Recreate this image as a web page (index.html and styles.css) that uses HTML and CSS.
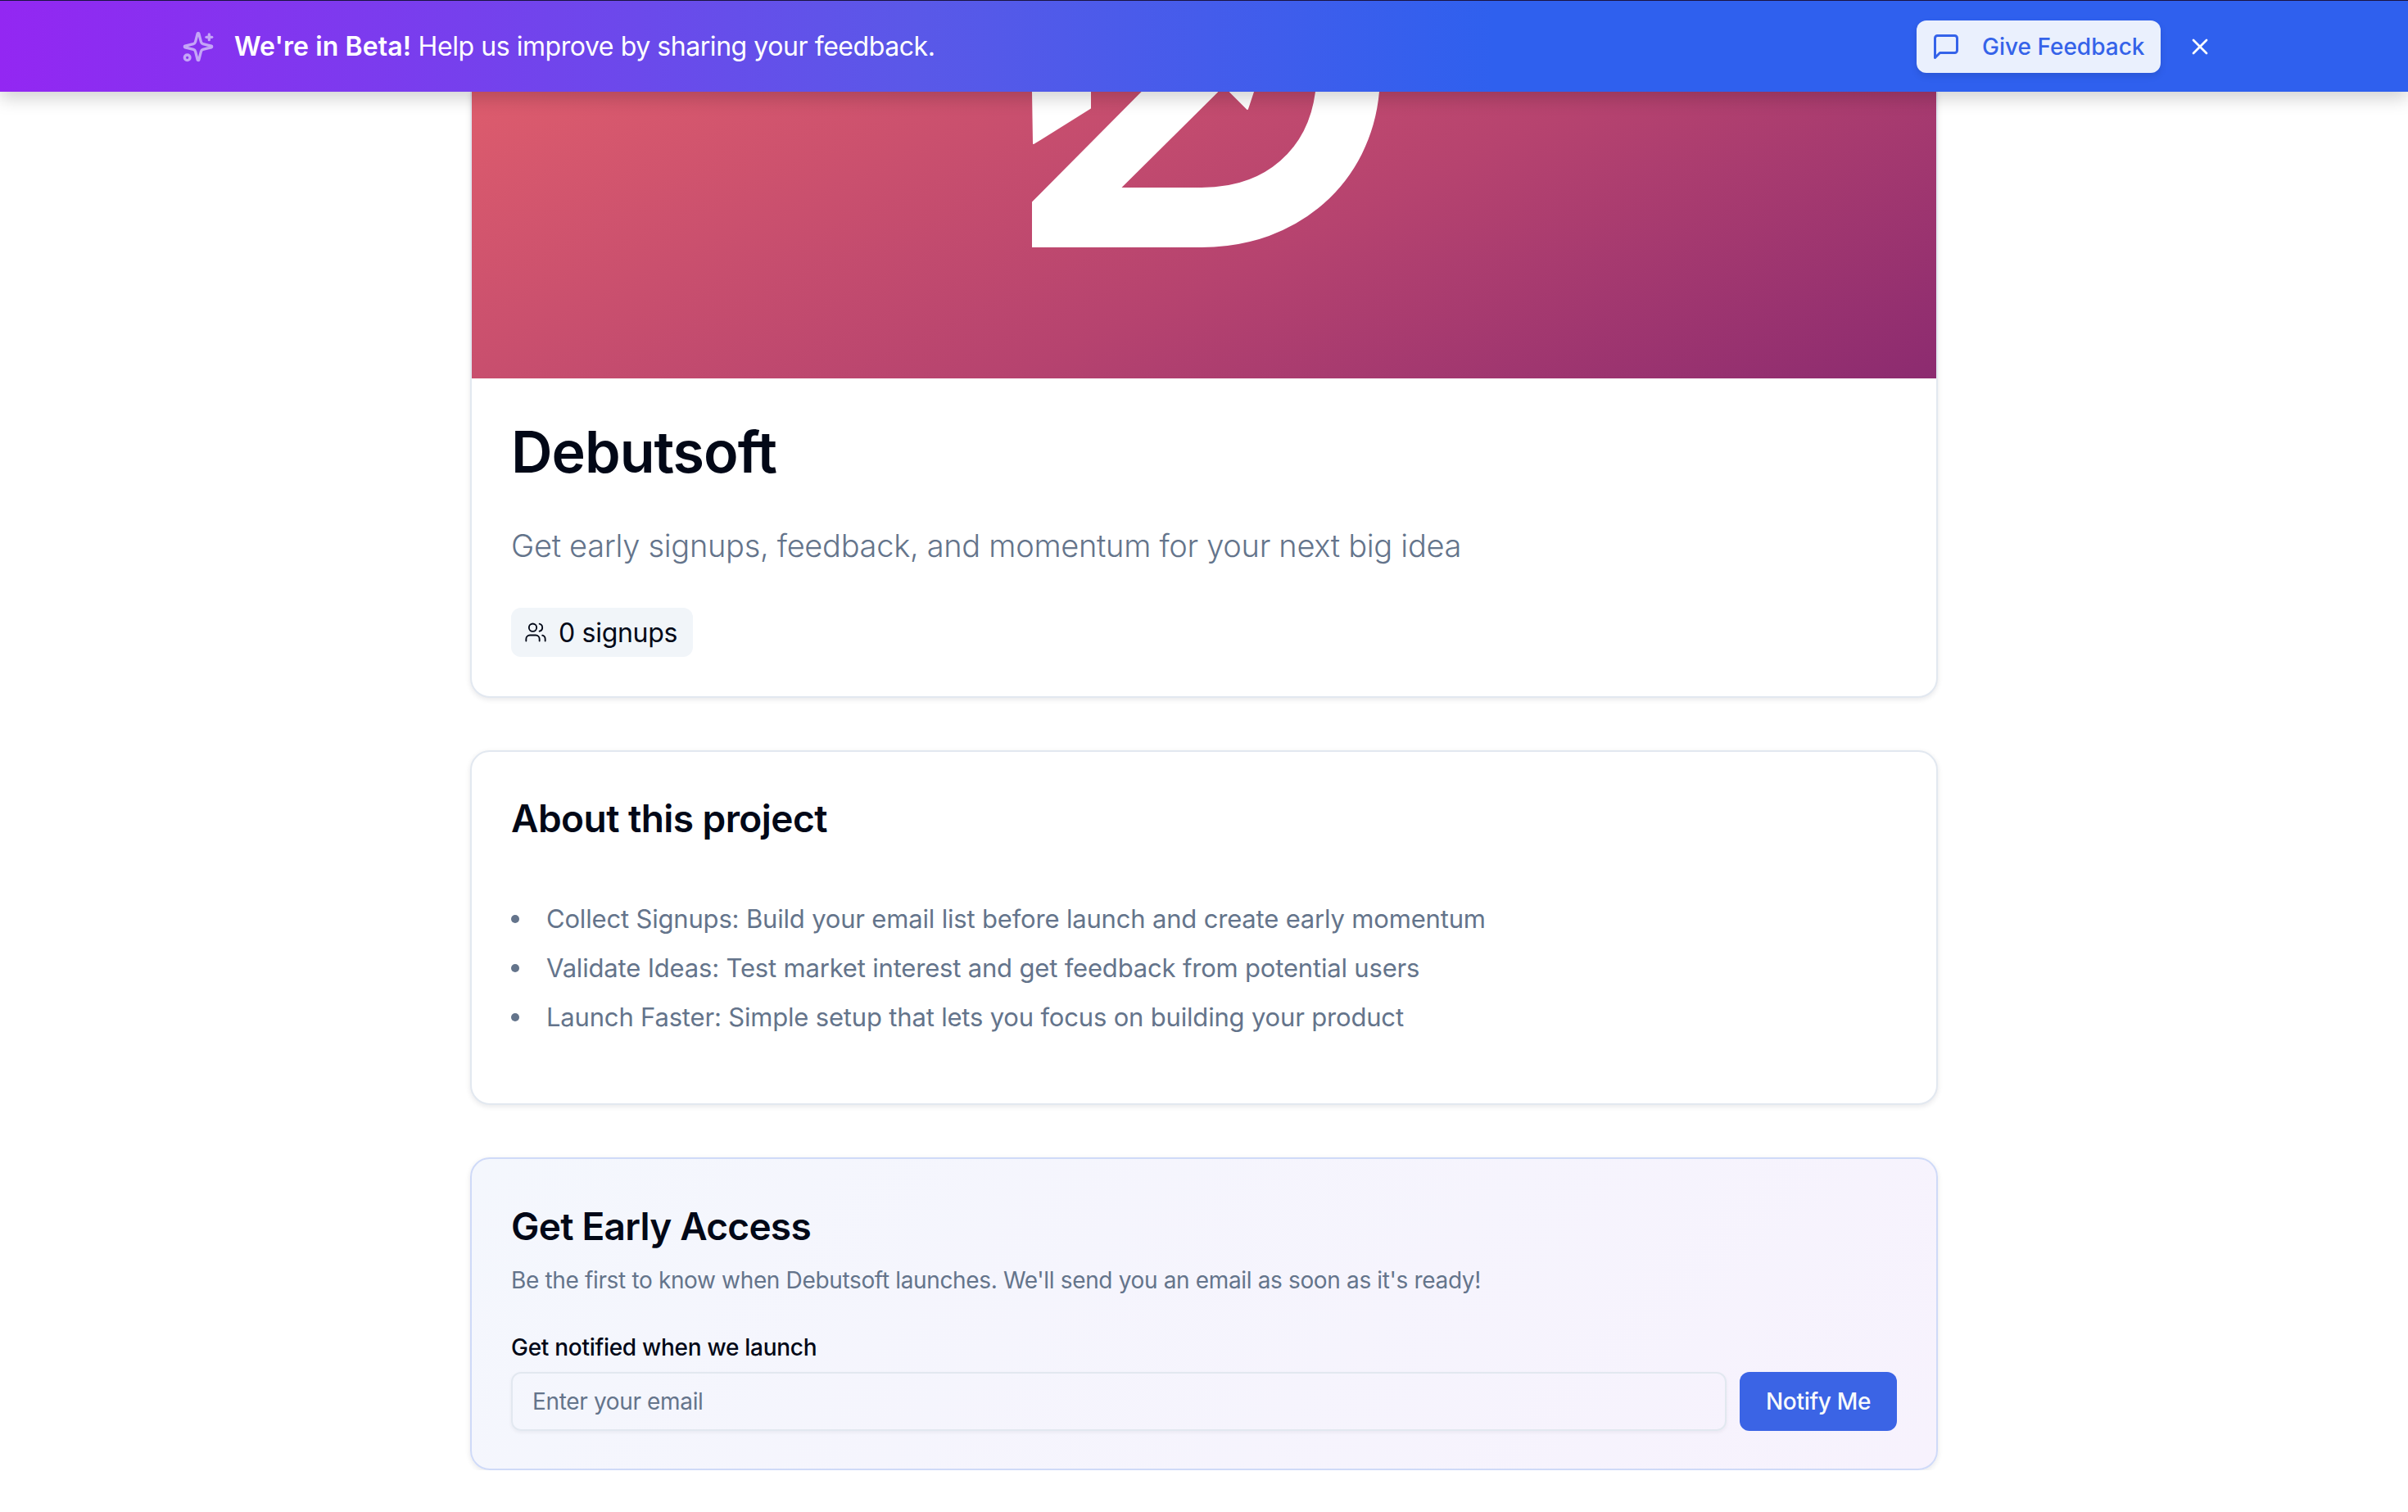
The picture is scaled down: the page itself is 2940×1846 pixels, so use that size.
FILE: index.html
```html
<!DOCTYPE html>
<html lang="en">
<head>
  <meta charset="UTF-8">
  <meta name="viewport" content="width=device-width, initial-scale=1.0">
  <title>Debutsoft</title>
  <link rel="stylesheet" href="styles.css">
</head>
<body>
  <div class="banner">
    <div class="banner-msg">
      <svg class="banner-spark" viewBox="0 0 24 24" fill="none" stroke="currentColor" stroke-width="2" stroke-linecap="round" stroke-linejoin="round">
        <path d="M9.937 15.5A2 2 0 0 0 8.5 14.063l-6.135-1.582a.5.5 0 0 1 0-.962L8.5 9.936A2 2 0 0 0 9.937 8.5l1.582-6.135a.5.5 0 0 1 .963 0L14.063 8.5A2 2 0 0 0 15.5 9.937l6.135 1.581a.5.5 0 0 1 0 .964L15.5 14.063a2 2 0 0 0-1.437 1.437l-1.582 6.135a.5.5 0 0 1-.963 0z"/>
        <path d="M20 3v4"/>
        <path d="M22 5h-4"/>
        <circle cx="4" cy="20" r="2"/>
      </svg>
      <p><strong>We're in Beta!</strong> Help us improve by sharing your feedback.</p>
    </div>
    <div class="banner-actions">
      <button class="feedback-btn">
        <svg viewBox="0 0 24 24" fill="none" stroke="currentColor" stroke-width="2" stroke-linecap="round" stroke-linejoin="round">
          <path d="M21 15a2 2 0 0 1-2 2H7l-4 4V5a2 2 0 0 1 2-2h14a2 2 0 0 1 2 2z"/>
        </svg>
        Give Feedback
      </button>
      <button class="close-btn">
        <svg viewBox="0 0 24 24" fill="none" stroke="currentColor" stroke-width="2" stroke-linecap="round" stroke-linejoin="round">
          <path d="M18 6 6 18"/>
          <path d="m6 6 12 12"/>
        </svg>
      </button>
    </div>
  </div>

  <div class="container">
    <div class="card hero-card">
      <div class="hero">
        <svg class="hero-logo" viewBox="0 0 424 190">
          <path d="M1 0H71V20L2 63Z"/>
          <path d="M135 0H226L107 118H207C287 118 338 70 347 0H423C413 110 325 189 207 189H0V136Z"/>
          <path d="M242 0H270L263 21Z"/>
        </svg>
      </div>
      <div class="hero-body">
        <h1>Debutsoft</h1>
        <p class="tagline">Get early signups, feedback, and momentum for your next big idea</p>
        <div class="signups">
          <svg viewBox="0 0 24 24" fill="none" stroke="currentColor" stroke-width="2" stroke-linecap="round" stroke-linejoin="round">
            <path d="M16 21v-2a4 4 0 0 0-4-4H6a4 4 0 0 0-4 4v2"/>
            <circle cx="9" cy="7" r="4"/>
            <path d="M22 21v-2a4 4 0 0 0-3-3.87"/>
            <path d="M16 3.13a4 4 0 0 1 0 7.75"/>
          </svg>
          <span>0 signups</span>
        </div>
      </div>
    </div>

    <div class="card about-card">
      <h2>About this project</h2>
      <ul>
        <li>Collect Signups: Build your email list before launch and create early momentum</li>
        <li>Validate Ideas: Test market interest and get feedback from potential users</li>
        <li>Launch Faster: Simple setup that lets you focus on building your product</li>
      </ul>
    </div>

    <div class="card signup-card">
      <h2>Get Early Access</h2>
      <p class="signup-desc">Be the first to know when Debutsoft launches. We'll send you an email as soon as it's ready!</p>
      <label class="signup-label" for="email">Get notified when we launch</label>
      <div class="signup-row">
        <input id="email" type="email" placeholder="Enter your email">
        <button class="notify-btn">Notify Me</button>
      </div>
    </div>
  </div>
</body>
</html>
```

FILE: styles.css
```css
* {
  box-sizing: border-box;
}
body {
  margin: 0;
  background: #fff;
  color: #020817;
  font-family: Inter, "Liberation Sans", sans-serif;
}
h1, h2, p, ul {
  margin: 0;
  padding: 0;
}
button {
  font-family: inherit;
  border: 0;
  cursor: pointer;
}

/* beta banner */
.banner {
  position: relative;
  z-index: 2;
  height: 112px;
  padding: 0 238px 0 222px;
  border-top: 1px solid #1a1340;
  display: flex;
  align-items: center;
  justify-content: space-between;
  color: #fff;
  background: linear-gradient(to right, #9327f2 0%, #5a58e8 38%, #2f60ee 62%, #2f60ee 100%);
  box-shadow: 0 8px 20px rgba(0, 0, 0, 0.18);
}
.banner-msg {
  display: flex;
  align-items: center;
  gap: 24px;
  font-size: 32px;
  letter-spacing: -0.44px;
}
.banner-msg strong {
  font-weight: 600;
  letter-spacing: 0.08px;
}
.banner-spark {
  width: 40px;
  height: 40px;
  color: #c4a5f7;
}
.banner-actions {
  display: flex;
  align-items: center;
  gap: 32px;
}
.feedback-btn {
  width: 298px;
  height: 64px;
  padding: 0 18px;
  display: flex;
  align-items: center;
  gap: 26px;
  border-radius: 12px;
  background: #eaf0fd;
  color: #3563e9;
  font-size: 28px;
  font-weight: 500;
  white-space: nowrap;
  box-shadow: 0 4px 8px rgba(0, 0, 0, 0.1);
}
.feedback-btn svg {
  width: 36px;
  height: 36px;
  flex: none;
}
.close-btn {
  padding: 0;
  display: flex;
  background: none;
  color: #fff;
}
.close-btn svg {
  width: 32px;
  height: 32px;
}

/* cards */
.container {
  width: 1792px;
  margin: 0 auto;
  display: flex;
  flex-direction: column;
  gap: 64px;
}
.card {
  border: 2px solid #e2e8f0;
  border-radius: 24px;
  background: #fff;
  box-shadow: 0 2px 6px rgba(15, 23, 42, 0.1);
}
.hero-card {
  border-top: 0;
  border-radius: 0 0 24px 24px;
}
.hero {
  position: relative;
  height: 350px;
  overflow: hidden;
  background: linear-gradient(155deg, #dd5c6d 0%, #b6436f 55%, #8c2b70 100%);
}
.hero-logo {
  position: absolute;
  left: 684px;
  top: 0;
  width: 424px;
  height: 190px;
  fill: #fff;
  stroke: #fff;
  stroke-width: 2;
  stroke-linejoin: round;
}
.hero-body {
  padding: 50px 48px 48px;
}
h1 {
  font-size: 70px;
  line-height: 80px;
  font-weight: 600;
  letter-spacing: -1px;
}
.tagline {
  margin-top: 46px;
  font-size: 38px;
  line-height: 56px;
  font-weight: 300;
  letter-spacing: -0.3px;
  color: #64748b;
}
.signups {
  margin-top: 48px;
  width: 222px;
  height: 60px;
  padding: 0 20px 0 16px;
  display: flex;
  align-items: center;
  gap: 14px;
  border-radius: 12px;
  background: #f1f5f9;
  font-size: 32px;
  letter-spacing: -0.3px;
  white-space: nowrap;
}
.signups svg {
  width: 28px;
  height: 28px;
  flex: none;
  stroke-width: 1.6;
}
h2 {
  font-size: 46px;
  line-height: 56px;
  font-weight: 600;
  letter-spacing: -0.55px;
}
.about-card {
  padding: 53px 48px 75px;
}
.about-card ul {
  margin-top: 65px;
  list-style: none;
  color: #64748b;
  font-size: 31px;
  line-height: 60px;
  letter-spacing: -0.18px;
}
.about-card li {
  display: flex;
  align-items: center;
  gap: 33px;
}
.about-card li::before {
  content: "";
  width: 10px;
  height: 10px;
  flex: none;
  border-radius: 50%;
  background: #64748b;
}
.signup-card {
  padding: 54px 48px 46px;
  border-color: #cfdaf8;
  background: linear-gradient(135deg, #f4f7fd, #f7f2fd);
}
.signup-card h2 {
  letter-spacing: -0.75px;
}
.signup-desc {
  margin-top: 18px;
  font-size: 28px;
  line-height: 40px;
  letter-spacing: -0.35px;
  color: #64748b;
}
.signup-label {
  display: block;
  margin-top: 42px;
  font-size: 28px;
  line-height: 40px;
  font-weight: 500;
  letter-spacing: -0.28px;
}
.signup-row {
  margin-top: 10px;
  display: flex;
  align-items: center;
  gap: 16px;
}
.signup-row input {
  flex: 1;
  height: 72px;
  padding: 0 24px;
  border: 2px solid #e2e8f0;
  border-radius: 12px;
  background: transparent;
  font-family: inherit;
  font-size: 28px;
  letter-spacing: -0.35px;
  box-shadow: 0 2px 4px rgba(15, 23, 42, 0.05);
}
.signup-row input::placeholder {
  color: #64748b;
}
.notify-btn {
  width: 192px;
  height: 72px;
  border-radius: 12px;
  background: #3b64e5;
  color: #f8fafc;
  font-size: 28px;
  font-weight: 500;
  letter-spacing: -0.3px;
}
```
